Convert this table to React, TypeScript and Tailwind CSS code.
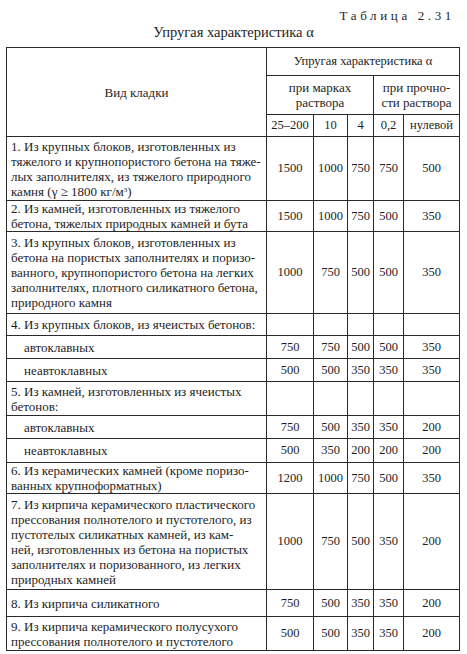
import React from "react";

const cellB = "border border-[#2a2a2a]";

type Row = {
  text: React.ReactNode;
  vals: string[];
  h: string;
  indent?: boolean;
};

const rows: Row[] = [
  {
    text: (
      <>
        1. Из крупных блоков, изготовленных из
        <br />
        тяжелого и крупнопористого бетона на тяже-
        <br />
        лых заполнителях, из тяжелого природного
        <br />
        камня (γ ≥ 1800 кг/м<sup className="text-[7px]">3</sup>)
      </>
    ),
    vals: ["1500", "1000", "750", "750", "500"],
    h: "h-[64px]",
  },
  {
    text: (
      <>
        2. Из камней, изготовленных из тяжелого
        <br />
        бетона, тяжелых природных камней и бута
      </>
    ),
    vals: ["1500", "1000", "750", "500", "350"],
    h: "h-[31px]",
  },
  {
    text: (
      <>
        3. Из крупных блоков, изготовленных из
        <br />
        бетона на пористых заполнителях и поризо-
        <br />
        ванного, крупнопористого бетона на легких
        <br />
        заполнителях, плотного силикатного бетона,
        <br />
        природного камня
      </>
    ),
    vals: ["1000", "750", "500", "500", "350"],
    h: "h-[82px]",
  },
  {
    text: <>4. Из крупных блоков, из ячеистых бетонов:</>,
    vals: ["", "", "", "", ""],
    h: "h-[22px]",
  },
  {
    text: <>автоклавных</>,
    vals: ["750", "750", "500", "500", "350"],
    h: "h-[23px]",
    indent: true,
  },
  {
    text: <>неавтоклавных</>,
    vals: ["500", "500", "350", "350", "350"],
    h: "h-[23px]",
    indent: true,
  },
  {
    text: (
      <>
        5. Из камней, изготовленных из ячеистых
        <br />
        бетонов:
      </>
    ),
    vals: ["", "", "", "", ""],
    h: "h-[34px]",
  },
  {
    text: <>автоклавных</>,
    vals: ["750", "500", "350", "350", "200"],
    h: "h-[23px]",
    indent: true,
  },
  {
    text: <>неавтоклавных</>,
    vals: ["500", "350", "200", "200", "200"],
    h: "h-[24px]",
    indent: true,
  },
  {
    text: (
      <>
        6. Из керамических камней (кроме поризо-
        <br />
        ванных крупноформатных)
      </>
    ),
    vals: ["1200", "1000", "750", "500", "350"],
    h: "h-[28px]",
  },
  {
    text: (
      <>
        7. Из кирпича керамического пластического
        <br />
        прессования полнотелого и пустотелого, из
        <br />
        пустотелых силикатных камней, из кам-
        <br />
        ней, изготовленных из бетона на пористых
        <br />
        заполнителях и поризованного, из легких
        <br />
        природных камней
      </>
    ),
    vals: ["1000", "750", "500", "350", "200"],
    h: "h-[96px]",
  },
  {
    text: <>8. Из кирпича силикатного</>,
    vals: ["750", "500", "350", "350", "200"],
    h: "h-[27px]",
  },
  {
    text: (
      <>
        9. Из кирпича керамического полусухого
        <br />
        прессования полнотелого и пустотелого
      </>
    ),
    vals: ["500", "500", "350", "350", "200"],
    h: "h-[34px]",
  },
];

export default function App() {
  return (
    <div className="w-[467px] h-[654px] bg-white text-[#1e1e1e] overflow-hidden font-['Liberation_Serif','Times_New_Roman',serif]">
      <div className="h-[47px] flex flex-col">
        <div className="h-[23px] flex justify-end items-end pr-[12px]">
          <span className="text-[13px] leading-[14px] tracking-[0.28em]">
            Таблица 2.31
          </span>
        </div>
        <div className="h-[18px] flex justify-center items-center">
          <span className="text-[14.5px] leading-[15px]">
            Упругая характеристика α
          </span>
        </div>
      </div>
      <table className="ml-[6px] w-[453px] table-fixed border-collapse text-[13px] leading-[15px] font-['Liberation_Serif','Times_New_Roman',serif]">
        <colgroup>
          <col className="w-[260px]" />
          <col className="w-[47px]" />
          <col className="w-[34px]" />
          <col className="w-[26px]" />
          <col className="w-[30px]" />
          <col className="w-[56px]" />
        </colgroup>
        <thead>
          <tr className="h-[28px]">
            <td rowSpan={3} className={`${cellB} text-center align-middle`}>
              Вид кладки
            </td>
            <td
              colSpan={5}
              className={`${cellB} text-center align-middle text-[12.5px]`}
            >
              Упругая характеристика α
            </td>
          </tr>
          <tr className="h-[39px]">
            <td colSpan={3} className={`${cellB} text-center align-middle`}>
              при марках
              <br />
              раствора
            </td>
            <td colSpan={2} className={`${cellB} text-center align-middle`}>
              при прочно-
              <br />
              сти раствора
            </td>
          </tr>
          <tr className="h-[22px] text-[12.5px]">
            <td className={`${cellB} text-center align-middle p-0`}>25–200</td>
            <td className={`${cellB} text-center align-middle p-0`}>10</td>
            <td className={`${cellB} text-center align-middle p-0`}>4</td>
            <td className={`${cellB} text-center align-middle p-0`}>0,2</td>
            <td className={`${cellB} text-center align-middle p-0`}>нулевой</td>
          </tr>
        </thead>
        <tbody>
          {rows.map((r, i) => (
            <tr key={i} className={r.h}>
              <td
                className={`${cellB} align-middle whitespace-nowrap ${
                  r.indent ? "pl-[17px]" : "pl-[4px]"
                }`}
              >
                {r.text}
              </td>
              {r.vals.map((v, j) => (
                <td
                  key={j}
                  className={`${cellB} text-center align-middle p-0 text-[12.5px]`}
                >
                  {v}
                </td>
              ))}
            </tr>
          ))}
        </tbody>
      </table>
    </div>
  );
}
